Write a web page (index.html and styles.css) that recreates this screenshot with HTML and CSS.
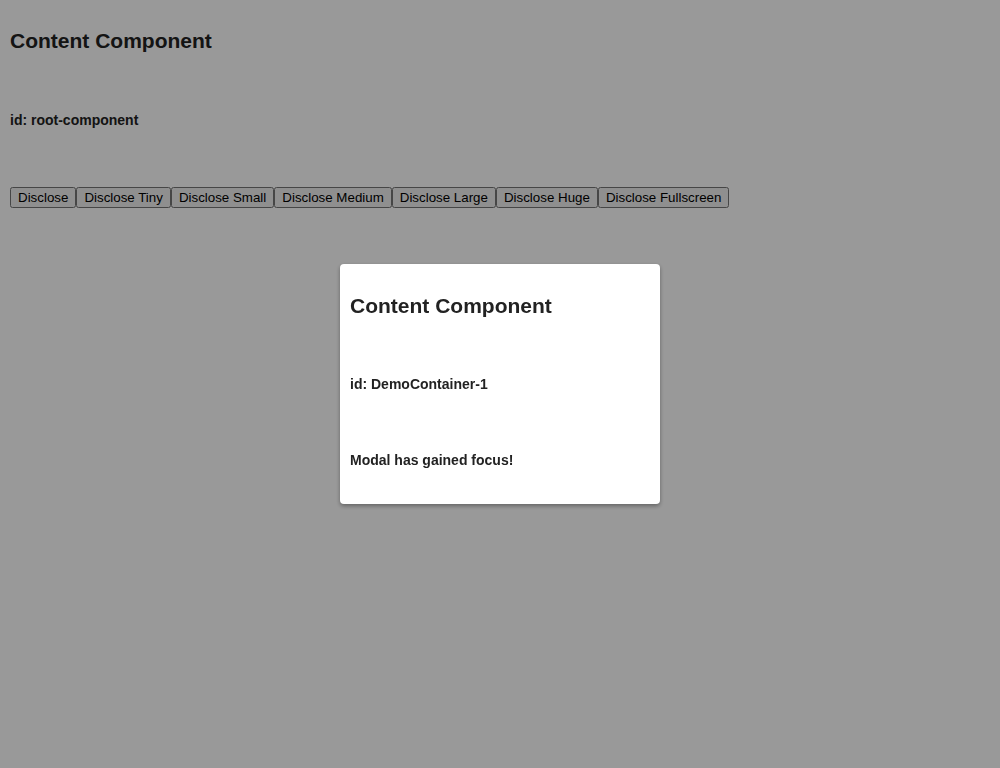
FILE: index.html
```html
<!DOCTYPE html>
<html>
<head>
<meta charset="utf-8">
<link rel="stylesheet" href="styles.css">
</head>
<body>
<div class="page">
  <h2 class="title">Content Component</h2>
  <p class="label">id: root-component</p>
  <div class="buttons"><button>Disclose</button><button>Disclose Tiny</button><button>Disclose Small</button><button>Disclose Medium</button><button>Disclose Large</button><button>Disclose Huge</button><button>Disclose Fullscreen</button></div>
</div>
<div class="overlay"></div>
<div class="modal">
  <h2 class="title">Content Component</h2>
  <p class="label">id: DemoContainer-1</p>
  <p class="label focus-note">Modal has gained focus!</p>
</div>
</body>
</html>
```
FILE: styles.css
```css
html, body {
  margin: 0;
  padding: 0;
  background: #ffffff;
  font-family: "Liberation Sans", Arial, sans-serif;
  color: #222222;
}
.page {
  display: flex;
  flex-direction: column;
  align-items: flex-start;
  gap: 59px;
  padding: 29px 10px;
}
.title {
  margin: 0;
  font-size: 21px;
  font-weight: bold;
  line-height: normal;
}
.label {
  margin: 0;
  font-size: 14px;
  font-weight: bold;
  line-height: normal;
}
.buttons {
  display: flex;
}
.buttons button {
  font-family: "Liberation Sans", Arial, sans-serif;
  font-size: 13.3333px;
  margin: 0;
}
.overlay {
  position: fixed;
  inset: 0;
  background: rgba(0, 0, 0, 0.4);
}
.modal {
  position: fixed;
  left: 340px;
  top: 264px;
  width: 320px;
  height: 240px;
  box-sizing: border-box;
  padding: 30px 10px;
  background: #ffffff;
  border-radius: 4px;
  box-shadow: 0 2px 4px rgba(0, 0, 0, 0.35);
  display: flex;
  flex-direction: column;
  gap: 58px;
}
.modal .focus-note {
  margin-top: 2px;
}
```
